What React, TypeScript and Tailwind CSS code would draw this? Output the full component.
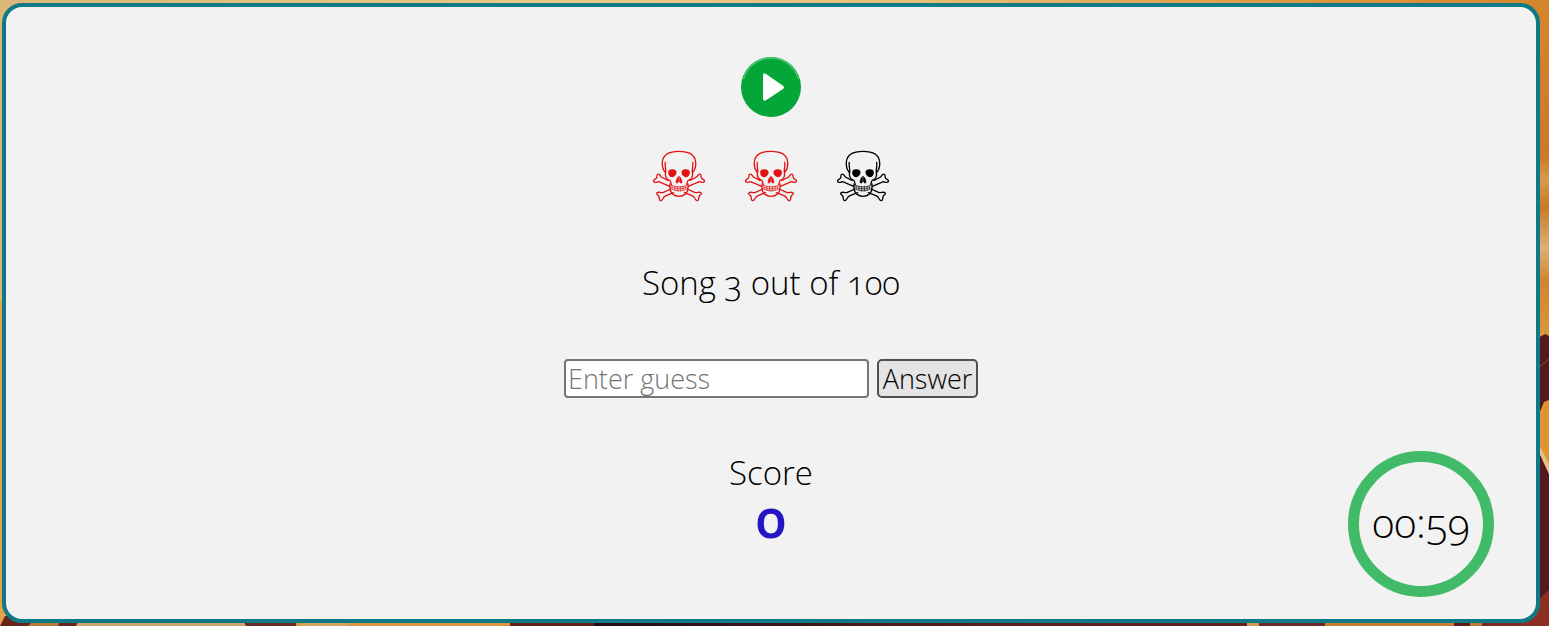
import { useState } from "react";

function Backdrop() {
  return (
    <svg
      className="absolute inset-0 -z-10 h-full w-full"
      viewBox="0 0 1549 626"
      preserveAspectRatio="none"
      aria-hidden="true"
    >
      <defs>
        <linearGradient id="sky" x1="0" x2="1" y1="0" y2="0">
          <stop offset="0" stopColor="#dcb878" />
          <stop offset="0.4" stopColor="#ecc889" />
          <stop offset="0.6" stopColor="#e8bd74" />
          <stop offset="0.85" stopColor="#dc9640" />
          <stop offset="1" stopColor="#d5862c" />
        </linearGradient>
        <linearGradient id="dark" x1="0" x2="1" y1="0" y2="0">
          <stop offset="0" stopColor="#1c0c14" />
          <stop offset="0.4" stopColor="#220f14" />
          <stop offset="0.65" stopColor="#5c1f1f" />
          <stop offset="1" stopColor="#6a2320" />
        </linearGradient>
        <linearGradient id="edge" x1="0" x2="0" y1="0" y2="1">
          <stop offset="0" stopColor="#d5862c" />
          <stop offset="0.45" stopColor="#c9792c" />
          <stop offset="0.52" stopColor="#d89a4c" />
          <stop offset="0.6" stopColor="#c87a2a" />
          <stop offset="0.72" stopColor="#dcb070" />
          <stop offset="0.82" stopColor="#cf8530" />
          <stop offset="1" stopColor="#dd9a3e" />
        </linearGradient>
      </defs>
      <rect width="1549" height="626" fill="url(#sky)" />
      <rect y="300" width="20" height="326" fill="#e2a446" />
      <rect x="1500" y="3" width="49" height="340" fill="url(#edge)" />
      <path d="M1538 338 L1545 334 L1549 336 V626 H1538Z" fill="#551a1d" />
      <path d="M1538 368 L1549 359" stroke="#9c4038" strokeWidth="1" />
      <path d="M1549 400 L1544 402 L1538 416 V450 L1549 474Z" fill="#dc9434" />
      <path d="M1538 450 L1549 474 V464 L1541 448Z" fill="#e2c08a" />
      <path d="M1538 600 L1549 590 V626 H1500 L1520 618Z" fill="#8c3023" />
      <rect x="20" y="616" width="1500" height="10" fill="url(#dark)" />
      <path d="M0 626 L5 616 H80 V626Z" fill="#6a241d" />
      <path d="M28 626 L34 620 H60 L58 626Z" fill="#b87936" />
      <path d="M80 618 H243 L246 626 H76Z" fill="#c9a568" />
      <rect x="246" y="618" width="50" height="8" fill="#6c2a26" />
      <rect x="296" y="618" width="214" height="8" fill="#d8963e" />
      <rect x="300" y="618" width="50" height="8" fill="#d4a45e" />
      <rect x="510" y="618" width="84" height="8" fill="#651f1d" />
      <rect x="1247" y="618" width="12" height="8" fill="#cf9c50" />
      <rect x="1259" y="618" width="66" height="8" fill="#6d2a2c" />
      <rect x="1325" y="618" width="129" height="8" fill="#c78033" />
      <rect x="1454" y="618" width="16" height="8" fill="#5b1d1d" />
      <rect x="1470" y="618" width="12" height="8" fill="#b97a34" />
      <rect x="1482" y="618" width="40" height="8" fill="#7a2a22" />
    </svg>
  );
}

function PlayIcon() {
  return (
    <svg className="size-full" viewBox="0 0 60 60" aria-hidden="true">
      <circle cx="30" cy="30" r="30" fill="#03a637" />
      <path
        d="M2.5 22 A28.5 28.5 0 0 1 57.5 22"
        fill="none"
        stroke="#4fc776"
        strokeWidth="1.4"
      />
      <path
        d="M22 18.5 C22 16.4 23.4 15.8 25 16.9 L42 28.8 C43.3 29.8 43.3 31 42 31.9 L25 43.3 C23.4 44.3 22 43.6 22 41.8Z"
        fill="#fff"
      />
    </svg>
  );
}

function Bone() {
  return (
    <>
      <path d="M57 101 L37 91 C34 87 30 80 26 83 C22 86 25 92 22 95 C18 99 11 100 14 105 C17 110 23 106 29 105 L62 119" />
      <path d="M66 127 L43 137 C37 140 29 134 24 138 C20 142 27 145 29 148 C32 152 29 157 33 161 C38 164 41 158 43 154 C45 149 49 148 53 146 L74 138" />
    </>
  );
}

function Skull({ lost }: { lost: boolean }) {
  return (
    <svg
      className={lost ? "size-[52px] text-[#e31212]" : "size-[52px] text-black"}
      viewBox="12 10 156 156"
      fill="none"
      stroke="currentColor"
      strokeWidth="4"
      strokeLinecap="round"
      strokeLinejoin="round"
      role="img"
      aria-label={lost ? "Life lost" : "Life left"}
    >
      <Bone />
      <g transform="matrix(-1 0 0 1 180 0)">
        <Bone />
      </g>
      <path d="M48 76 C42 69 39 58 40 46 C42 23 62 14 90 14 C118 14 138 23 140 46 C141 58 138 69 132 76" />
      <path d="M49 47 C46 56 52 66 50 76 C47 90 51 97 62 101 C66 104 65 110 67 115" />
      <path d="M131 47 C134 56 128 66 130 76 C133 90 129 97 118 101 C114 104 115 110 113 115" />
      <path d="M63 112 C62 125 63 137 72 143 C80 151 100 151 108 143 C117 137 118 125 117 112" />
      <path
        d="M70 117 C83 122 97 122 110 117 V128 C98 134 82 134 70 128Z M71 123 C84 128 96 128 109 123 M78 119 V131 M86 120 V133 M94 120 V133 M102 119 V131"
        strokeWidth="2.2"
      />
      <path
        d="M61 72 C67 69 77 69 80 74 C82 80 78 88 70 90 C62 90 57 80 61 72Z M119 72 C113 69 103 69 100 74 C98 80 102 88 110 90 C118 90 123 80 119 72Z"
        fill="currentColor"
      />
      <path
        d="M88 90 C83 94 80 105 82 109 C86 110 88 107 89 103Z M92 90 C97 94 100 105 98 109 C94 110 92 107 91 103Z"
        fill="currentColor"
        strokeWidth="2"
      />
    </svg>
  );
}

export default function App() {
  const [guess, setGuess] = useState("");
  const lives = [true, true, false];

  return (
    <div className="relative isolate min-h-screen overflow-hidden py-[3px] pr-[9px] pl-0.5 font-['Open_Sans','Lato',sans-serif] text-[33px] leading-10 font-light text-black oldstyle-nums">
      <Backdrop />
      <main className="relative flex flex-col items-center rounded-[20px] border-4 border-[#0e7a87] bg-[#f2f2f2] pt-[50px] pb-[78px]">
        <button type="button" aria-label="Play" className="size-[60px] rounded-full">
          <PlayIcon />
        </button>
        <div className="mt-[33px] flex gap-10">
          {lives.map((lost, i) => (
            <Skull key={i} lost={lost} />
          ))}
        </div>
        <p className="mt-[61px]">Song 3 out of 100</p>
        <form
          className="mt-14 flex gap-2 text-[27px] leading-9"
          onSubmit={(e) => e.preventDefault()}
        >
          <input
            type="text"
            aria-label="Enter guess"
            placeholder="Enter guess"
            value={guess}
            onChange={(e) => setGuess(e.target.value)}
            className="h-[39px] w-[305px] rounded border-2 border-[#767676] bg-white px-0.5 placeholder:text-[#757575]"
          />
          <button
            type="submit"
            className="h-[39px] w-[101px] rounded-[5px] border-2 border-[#4f4f4f] bg-[#e4e4e4]"
          >
            Answer
          </button>
        </form>
        <h2 className="mt-[55px] font-light">Score</h2>
        <p className="text-[54px] leading-12 font-semibold text-[#2416c4]">0</p>
        <div className="absolute right-[42px] bottom-[22px] flex size-[146px] items-center justify-center rounded-full border-[11px] border-[#41bb68] pb-1 text-[41px]">
          <span role="timer">00:59</span>
        </div>
      </main>
    </div>
  );
}
